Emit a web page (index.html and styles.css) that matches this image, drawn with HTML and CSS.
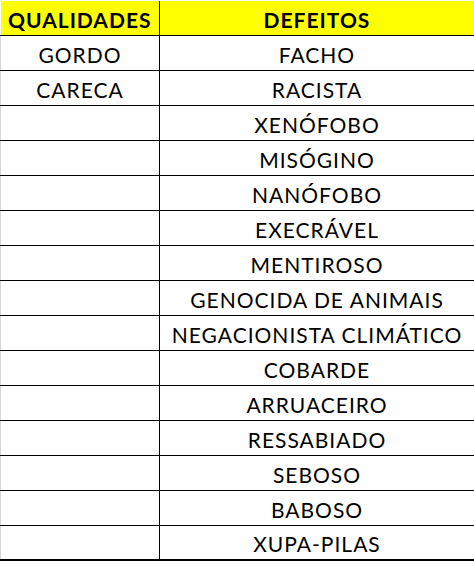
FILE: index.html
```html
<!DOCTYPE html>
<html lang="pt">
<head>
<meta charset="utf-8">
<link rel="stylesheet" href="styles.css">
</head>
<body>
<table class="sheet">
  <colgroup><col class="col-a"><col class="col-b"></colgroup>
  <thead>
    <tr class="head"><th>QUALIDADES</th><th>DEFEITOS</th></tr>
  </thead>
  <tbody>
    <tr><td>GORDO</td><td>FACHO</td></tr>
    <tr><td>CARECA</td><td>RACISTA</td></tr>
    <tr><td></td><td>XENÓFOBO</td></tr>
    <tr><td></td><td>MISÓGINO</td></tr>
    <tr><td></td><td>NANÓFOBO</td></tr>
    <tr><td></td><td>EXECRÁVEL</td></tr>
    <tr><td></td><td>MENTIROSO</td></tr>
    <tr><td></td><td>GENOCIDA DE ANIMAIS</td></tr>
    <tr><td></td><td>NEGACIONISTA CLIMÁTICO</td></tr>
    <tr><td></td><td>COBARDE</td></tr>
    <tr><td></td><td>ARRUACEIRO</td></tr>
    <tr><td></td><td>RESSABIADO</td></tr>
    <tr><td></td><td>SEBOSO</td></tr>
    <tr><td></td><td>BABOSO</td></tr>
    <tr><td></td><td>XUPA-PILAS</td></tr>
  </tbody>
</table>
</body>
</html>
```

FILE: styles.css
```css
html, body {
  margin: 0;
  padding: 0;
  background: #ffffff;
}
body {
  padding-top: 1px;
}
.sheet {
  width: 474px;
  border-collapse: collapse;
  table-layout: fixed;
  font-family: Lato, "Open Sans", sans-serif;
  font-size: 21px;
  letter-spacing: 1px;
  color: #000000;
}
.col-a { width: 159px; }
.col-b { width: 315px; }
.sheet th,
.sheet td {
  padding: 0;
  text-align: center;
  vertical-align: middle;
  white-space: nowrap;
  border-right: 1px solid #000000;
  border-bottom: 1px solid #000000;
  line-height: 1;
}
.sheet td:first-child {
  border-left: 1px solid #d4d4d4;
}
.sheet tbody tr {
  height: 35px;
}
.sheet tbody td {
  padding-top: 3px;
}
.head {
  height: 34px;
  background: #ffff00;
}
.head th {
  font-weight: 700;
  font-size: 21px;
  letter-spacing: 1px;
  padding-top: 3px;
}
.sheet tbody tr:last-child td {
  border-bottom-width: 2px;
}
```
